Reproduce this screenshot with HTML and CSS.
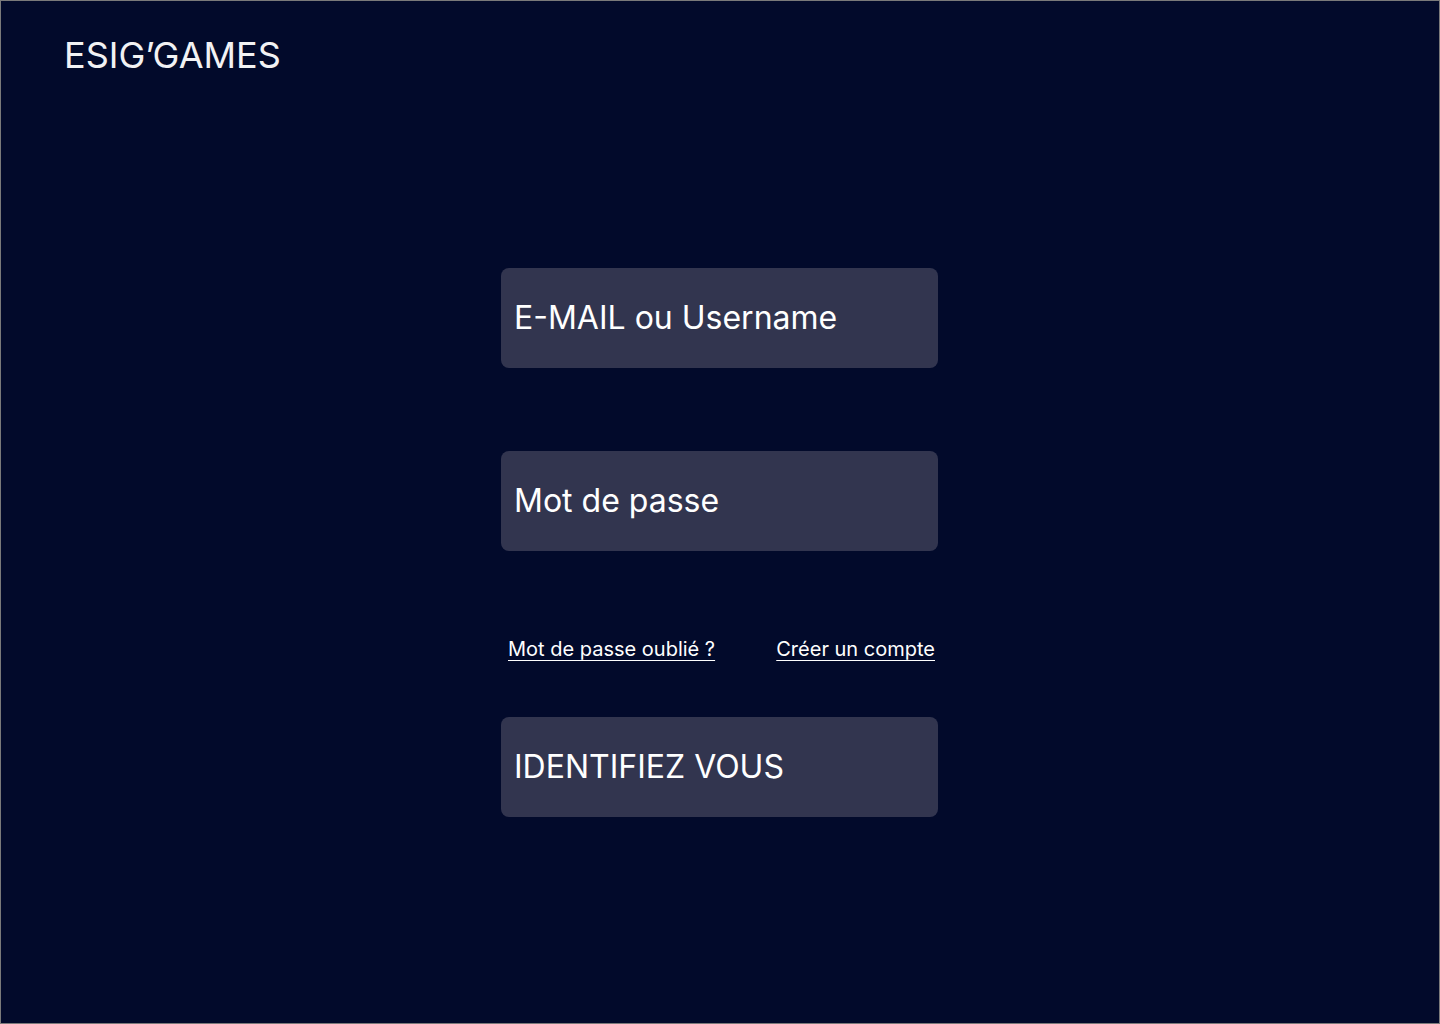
FILE: index.html
```html
<!DOCTYPE html>
<html lang="fr">
<head>
<meta charset="utf-8">
<title>ESIG'GAMES</title>
<link rel="stylesheet" href="styles.css">
</head>
<body>
<div class="frame">
  <header class="header">
    <div class="logo">ESIG’GAMES</div>
  </header>
  <main class="main">
    <form class="form">
      <div class="field">E-MAIL ou Username</div>
      <div class="field field-pass">Mot de passe</div>
      <div class="links">
        <a class="link" href="#">Mot de passe oublié ?</a>
        <a class="link" href="#">Créer un compte</a>
      </div>
      <div class="field submit">IDENTIFIEZ VOUS</div>
    </form>
  </main>
</div>
</body>
</html>
```
FILE: styles.css
```css
* { box-sizing: border-box; }
html, body {
  margin: 0;
  padding: 0;
  background: #020a2b;
}
.frame {
  width: 1440px;
  height: 1024px;
  border: 1px solid #7a7a7a;
  background: #020a2b;
  color: #ffffff;
  font-family: Inter, "Noto Sans", sans-serif;
  display: flex;
  flex-direction: column;
}
.header {
  padding: 34px 0 0 63px;
}
.logo {
  font-size: 36px;
  line-height: 41px;
  color: #f2f2f4;
  font-weight: 400;
}
.main {
  display: flex;
  padding-top: 192px;
  padding-left: 500px;
}
.form {
  width: 437px;
  display: flex;
  flex-direction: column;
}
.field {
  height: 100px;
  background: #32354f;
  border-radius: 8px;
  padding: 0 13px 2px;
  display: flex;
  align-items: center;
  font-size: 32px;
  color: #ffffff;
}
.field-pass {
  margin-top: 83px;
}
.links {
  margin-top: 82px;
  display: flex;
  justify-content: space-between;
  padding: 0 3px 0 7px;
  height: 32px;
  align-items: center;
}
.link {
  color: #ffffff;
  font-size: 20px;
  text-decoration: underline;
  text-underline-offset: 4px;
  text-decoration-thickness: 1px;
}
.submit {
  margin-top: 52px;
}
```
